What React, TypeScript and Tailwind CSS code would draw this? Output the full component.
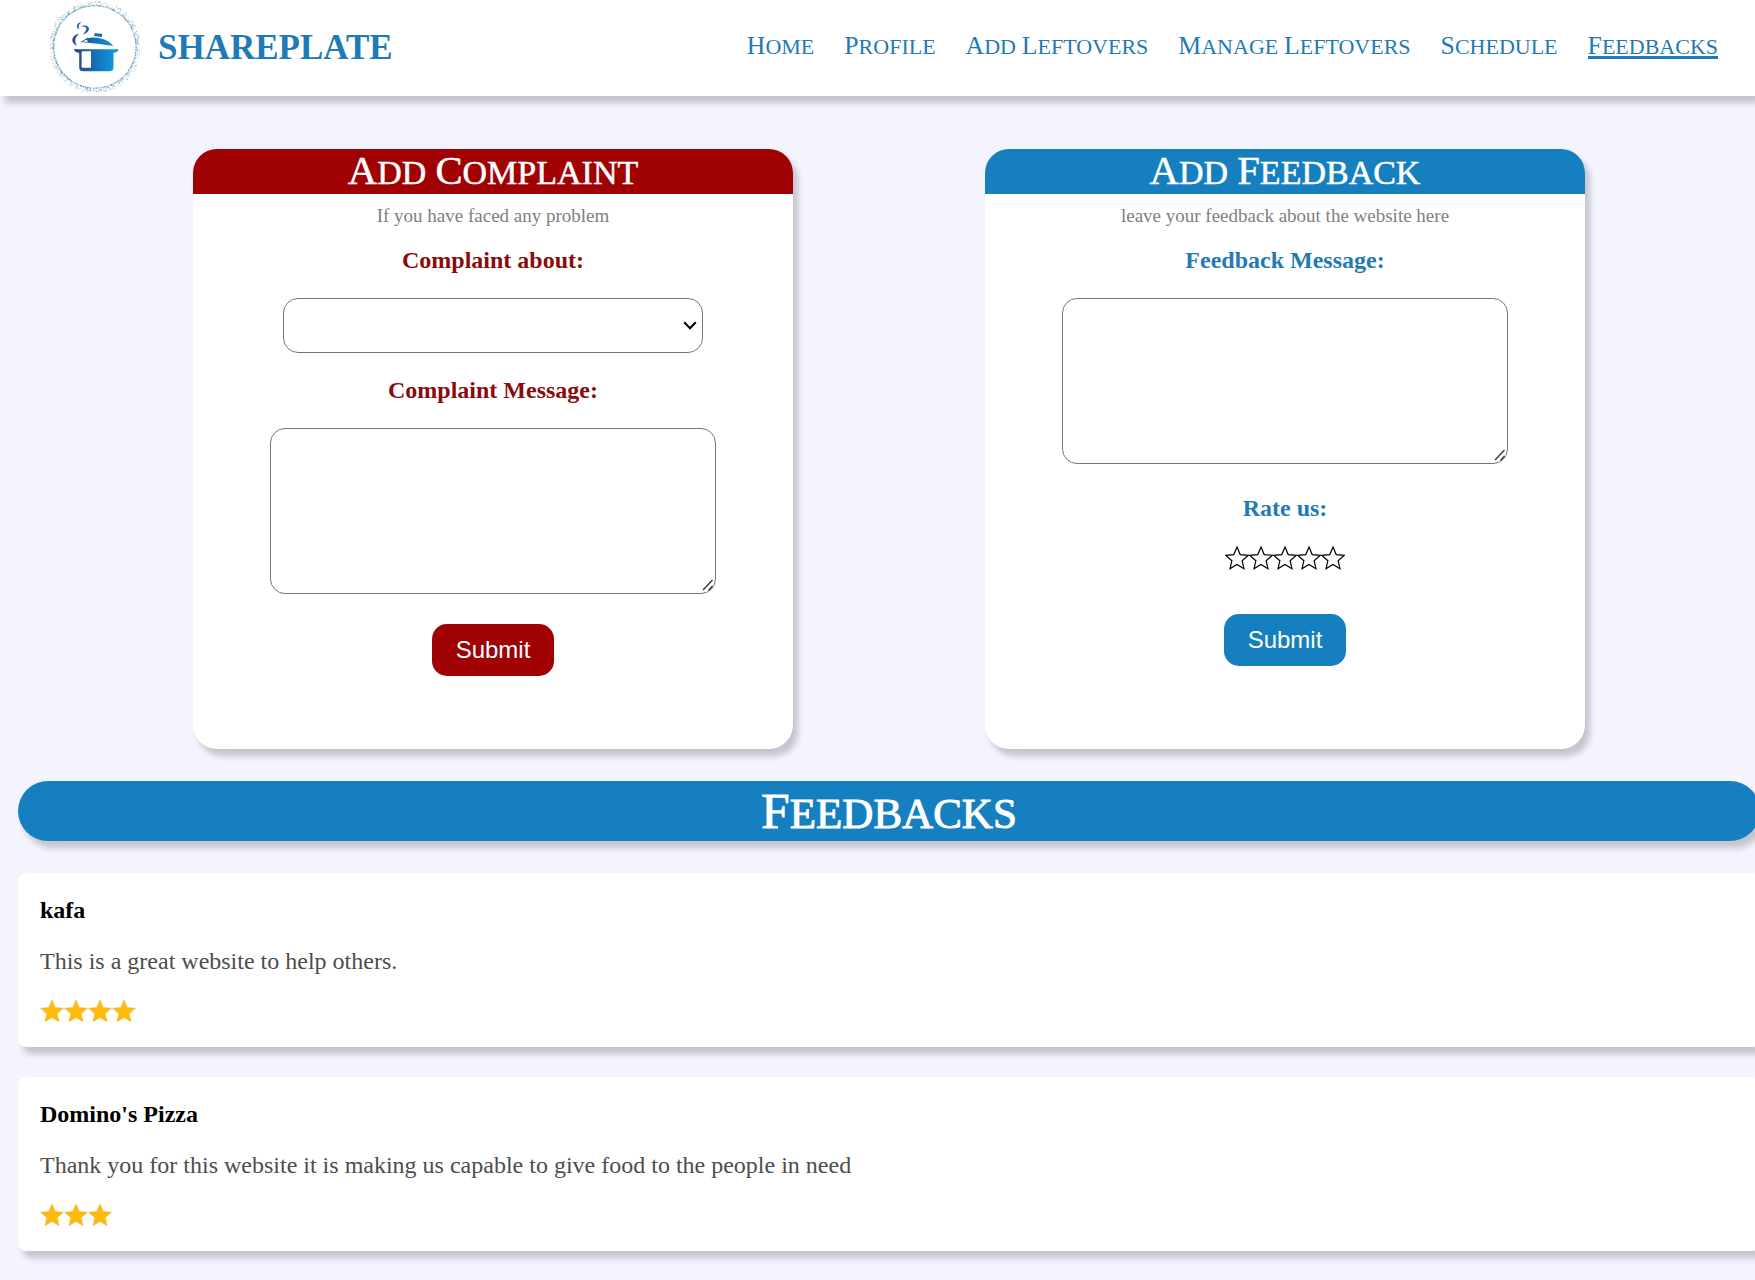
import React from "react";

const NAV = ["Home", "Profile", "Add Leftovers", "Manage Leftovers", "Schedule", "Feedbacks"];

const REVIEWS = [
  { name: "kafa", text: "This is a great website to help others.", stars: 4 },
  {
    name: "Domino's Pizza",
    text: "Thank you for this website it is making us capable to give food to the people in need",
    stars: 3,
  },
];

const STAR = "12,1 15.2,8.6 23.4,9.3 17.1,14.7 19,22.7 12,18.4 5,22.7 6.9,14.7 0.6,9.3 8.8,8.6";

/* Small capitals whose word initials are only slightly taller than the rest. */
function Caps({ text }: { text: string }) {
  return (
    <>
      {text.split(" ").map((word, i) => (
        <React.Fragment key={i}>
          {i > 0 && <span className="text-[0.75em]"> </span>}
          <span className="inline-block [font-variant-caps:small-caps] first-letter:text-[0.83em]">{word}</span>
        </React.Fragment>
      ))}
    </>
  );
}

/* Fixed pseudo-random dots around the logo ring. */
const DOTS = Array.from({ length: 900 }, (_, i) => {
  const r1 = Math.abs(Math.sin(i * 12.9898) * 43758.5453) % 1;
  const r2 = Math.abs(Math.sin(i * 78.233 + 4) * 24634.6345) % 1;
  const r3 = Math.abs(Math.sin(i * 39.425 + 9) * 9631.771) % 1;
  const angle = r1 * Math.PI * 2;
  const radius = 41 + r2 * r2 * 5;
  return { x: 44.5 + Math.cos(angle) * radius, y: 46.5 + Math.sin(angle) * radius, o: 0.2 + r3 * 0.5 };
});

function Logo() {
  return (
    <svg viewBox="0 0 90 96" className="h-24 w-[90px]" role="img" aria-label="Shareplate logo">
      <defs>
        <linearGradient id="pot" gradientUnits="userSpaceOnUse" x1="24" x2="66" y1="0" y2="0">
          <stop offset="0" stopColor="#2b3f88" />
          <stop offset="0.45" stopColor="#1769b4" />
          <stop offset="1" stopColor="#0f9be0" />
        </linearGradient>
      </defs>
      <circle cx="44.7" cy="47" r="41.2" fill="none" stroke="#7fa9c4" strokeWidth="0.8" strokeDasharray="1.6 1" />
      {DOTS.map((d, i) => (
        <rect key={i} x={d.x} y={d.y} width="0.9" height="0.9" fill="#4f87ab" opacity={d.o} />
      ))}
      <path
        fill="url(#pot)"
        fillRule="evenodd"
        d="M24 49l5.300 0.300H63.300L68.300 49l-0.800 2.800-4 1.200V67.500q0 3.700-4 3.700H33.200q-4 0-4-3.700V53l-4-1.200zM32.800 51.300q-1.200 0-1.200 1.200V66.500q0 1.200 1.200 1.200H41V51.300z"
      />
      <path
        fill="url(#pot)"
        fillRule="evenodd"
        d="M30.500 42q3-1.500 6-3.800 8-1.400 14 .3 8.500 1.600 12.800 7.500-15-2.600-32.800-4zM32.500 41.600l5 .4-.3-2.200q-2.500.6-4.700 1.800z"
      />
      <path fill="#1769b4" d="M44.800 33l7.600 1-.6 3-7.800-1z" />
      <path fill="#245fa6" d="M31.500 22c-5.500 1-6 5.500-2 7.500-1.500-3-1-5 2-7.500z" />
      <path fill="#245fa6" d="M31 27c3-3 8-1.500 8 1.800 0 3-3 4-5.500 6 .4-2.800 3-4 2.800-6.300-.1-1.700-2.500-2.300-5.300-1.500z" />
      <path fill="#2a4f98" d="M29 33.500c-8 2-9 9.500-2 12.300-2.500-4.300-2.500-7.800 2-12.300z" />
    </svg>
  );
}

function OutlineStar() {
  return (
    <svg viewBox="0 0 24 24" className="size-6" aria-hidden="true">
      <polygon points={STAR} fill="none" stroke="#000" strokeWidth="1.200" />
    </svg>
  );
}

function FormCard({ title, note, tone, children }: { title: string; note: string; tone: string; children: React.ReactNode }) {
  return (
    <form
      onSubmit={(e) => e.preventDefault()}
      className="flex min-h-[600px] w-[600px] flex-col items-center rounded-3xl bg-white shadow-[5px_7px_6px_rgba(0,0,0,0.2)]"
    >
      <h2
        className={`h-[45px] w-full rounded-t-3xl text-center text-[49px] leading-[37px] text-white [-webkit-text-stroke:0.5px_white] ${tone}`}
      >
        <Caps text={title} />
      </h2>
      <p className="mt-[10px] text-[19px] leading-6 text-[#808080]">{note}</p>
      {children}
    </form>
  );
}

function MessageBox({ id }: { id: string }) {
  return (
    <div className="relative mt-6 h-[166px]">
      <textarea
        id={id}
        className="block h-[166px] w-[446px] rounded-[15px] border border-[#767676] bg-white p-2 [&::-webkit-resizer]:bg-transparent"
      />
      <svg viewBox="0 0 12 12" className="pointer-events-none absolute right-[2px] bottom-[3px] size-3" aria-hidden="true">
        <path d="M1 11L10.500 1M6.500 11.500L10.500 7" stroke="#333" strokeWidth="1.300" fill="none" />
      </svg>
    </div>
  );
}

const LABEL = "text-2xl leading-7 font-bold";
const BUTTON = "rounded-[15px] px-6 py-3 font-['Liberation_Sans',sans-serif] text-2xl leading-7 text-white";

export default function App() {
  return (
    <div className="min-h-screen overflow-hidden bg-[#f4f4ff] font-['Liberation_Serif',serif]">
      <header className="flex h-24 items-center justify-between bg-white pr-[37px] pl-[50px] text-[#1f7ab5] shadow-[5px_7px_6px_rgba(0,0,0,0.2)]">
        <div className="flex items-center gap-[18px]">
          <Logo />
          <span className="text-[35px] leading-10 font-bold">SHAREPLATE</span>
        </div>
        <nav className="flex gap-[30px] pb-[5px] text-[31px] leading-[23px] whitespace-nowrap">
          {NAV.map((item) => (
            <a
              key={item}
              href="#"
              className={
                item === "Feedbacks" ? "h-[27px] border-b-3 border-[#1f7ab5]" : "h-[27px] border-b-3 border-transparent"
              }
            >
              <Caps text={item} />
            </a>
          ))}
        </nav>
      </header>

      <main className="-mr-[5px] ml-[18px] pt-[53px]">
        <div className="flex flex-wrap justify-center gap-x-48 gap-y-8">
          <FormCard title="Add Complaint" note="If you have faced any problem" tone="bg-[#a00204]">
            <label htmlFor="about" className={`mt-[18px] text-[#8b0a0a] ${LABEL}`}>
              Complaint about:
            </label>
            <div className="relative mt-6">
              <select
                id="about"
                className="block h-[55px] w-[420px] appearance-none rounded-[15px] border border-[#767676] bg-white px-3 text-black"
              />
              <svg
                viewBox="0 0 14 9"
                className="pointer-events-none absolute top-[23px] right-[6px] h-[9px] w-[14px]"
                aria-hidden="true"
              >
                <path d="M1.200 1.200L7 7.200L12.800 1.200" stroke="#000" strokeWidth="2" fill="none" />
              </svg>
            </div>
            <label htmlFor="complaint" className={`mt-[23px] text-[#8b0a0a] ${LABEL}`}>
              Complaint Message:
            </label>
            <MessageBox id="complaint" />
            <button type="submit" className={`mt-[30px] bg-[#a00204] ${BUTTON}`}>
              Submit
            </button>
          </FormCard>

          <FormCard title="Add Feedback" note="leave your feedback about the website here" tone="bg-[#167fbf]">
            <label htmlFor="feedback" className={`mt-[18px] text-[#1f7ab5] ${LABEL}`}>
              Feedback Message:
            </label>
            <MessageBox id="feedback" />
            <fieldset className="mt-[30px] flex flex-col items-center">
              <legend className={`text-center text-[#1f7ab5] ${LABEL}`}>Rate us:</legend>
              <div className="mt-6 flex">
                {[1, 2, 3, 4, 5].map((n) => (
                  <label key={n} className="relative cursor-pointer">
                    <input type="radio" name="rating" value={n} aria-label={`${n} stars`} className="sr-only" />
                    <OutlineStar />
                  </label>
                ))}
              </div>
            </fieldset>
            <button type="submit" className={`mt-11 bg-[#167fbf] ${BUTTON}`}>
              Submit
            </button>
          </FormCard>
        </div>

        <h1 className="mt-8 h-[60px] rounded-[30px] bg-[#167fbf] text-center text-[62px] leading-[52px] text-white shadow-[5px_7px_6px_rgba(0,0,0,0.2)] [-webkit-text-stroke:1px_white]">
          <Caps text="Feedbacks" />
        </h1>

        <section className="mt-8 flex flex-col gap-[30px] pb-7">
          {REVIEWS.map((r) => (
            <article
              key={r.name}
              className="rounded-lg bg-white px-[22px] pt-[23px] pb-6 text-2xl leading-7 shadow-[5px_7px_6px_rgba(0,0,0,0.2)]"
            >
              <h3 className="font-bold text-black">{r.name}</h3>
              <p className="mt-[23px] text-[#4d4d4d]">{r.text}</p>
              <div className="mt-6 flex" role="img" aria-label={`${r.stars} stars`}>
                {Array.from({ length: r.stars }, (_, i) => (
                  <svg key={i} viewBox="0 0 24 24" className="size-6" aria-hidden="true">
                    <polygon points={STAR} fill="#ffbb0b" stroke="#eeb040" strokeWidth="0.600" />
                  </svg>
                ))}
              </div>
            </article>
          ))}
        </section>
      </main>
    </div>
  );
}
